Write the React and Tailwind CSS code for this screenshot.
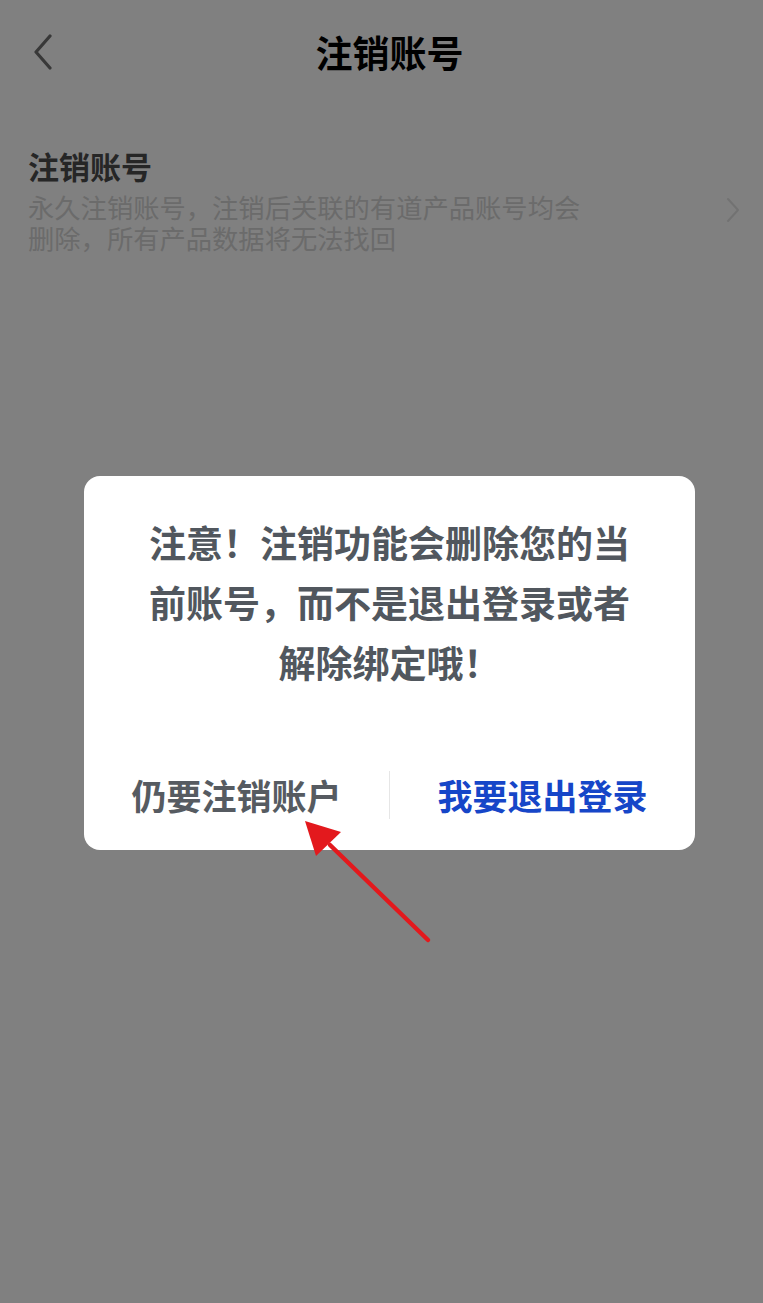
export default function App() {
  return (
    <div
      className="relative w-[763px] h-[1303px] bg-[#808080] overflow-hidden"
      style={{ fontFamily: '"Noto Sans CJK SC", "Noto Sans", sans-serif' }}
    >
      {/* 顶部导航 */}
      <div className="relative flex items-center justify-center h-[104px] pl-[16px]">
        <button className="absolute left-[26px] top-[30px] w-[34px] h-[44px] flex items-center justify-center">
          <svg width="24" height="36" viewBox="0 0 24 36" fill="none">
            <path d="M19 2 L5 18 L19 34" stroke="#383838" strokeWidth="3.2" strokeLinecap="round" strokeLinejoin="round" />
          </svg>
        </button>
        <h1 className="text-[37px] leading-none font-bold text-black">注销账号</h1>
      </div>

      {/* 列表项 */}
      <div className="flex items-center pl-[28px] pr-[22px] pt-[42px]">
        <div className="flex-1">
          <div className="text-[31px] leading-[40px] font-bold text-[#262626]">注销账号</div>
          <div className="mt-[5px] w-[570px] text-[26.3px] leading-[31px] text-[#6b6b6b]">
            永久注销账号，注销后关联的有道产品账号均会删除，所有产品数据将无法找回
          </div>
        </div>
        <svg width="16" height="26" viewBox="0 0 16 26" fill="none" className="mt-[20px]">
          <path d="M3 2 L13 13 L3 24" stroke="#727272" strokeWidth="2" strokeLinecap="round" strokeLinejoin="round" />
        </svg>
      </div>

      {/* 弹窗 */}
      <div className="absolute inset-0 flex justify-center pt-[476px] pl-[16px]">
        <div className="w-[611px] h-[374px] bg-white rounded-[16px] flex flex-col">
          <p className="pt-[36px] px-[56px] text-center text-[37px] leading-[60px] font-bold text-[#51575e]">
            注意！注销功能会删除您的当前账号，而不是退出登录或者解除绑定哦！
          </p>
          <div className="mt-auto h-[110px] flex items-center">
            <button className="flex-1 text-[35px] font-bold text-[#565b61]">仍要注销账户</button>
            <div className="w-px h-[48px] bg-[#e6e6e6]" />
            <button className="flex-1 text-[35px] font-bold text-[#1646c8]">我要退出登录</button>
          </div>
        </div>
      </div>

      {/* 红色箭头标注 */}
      <svg className="absolute left-0 top-0" width="763" height="1303" viewBox="0 0 763 1303" fill="none">
        <line x1="428" y1="940" x2="330" y2="845" stroke="#e3191d" strokeWidth="4.5" strokeLinecap="round" />
        <polygon points="305,821 341,832 316,856" fill="#e3191d" />
      </svg>
    </div>
  );
}
